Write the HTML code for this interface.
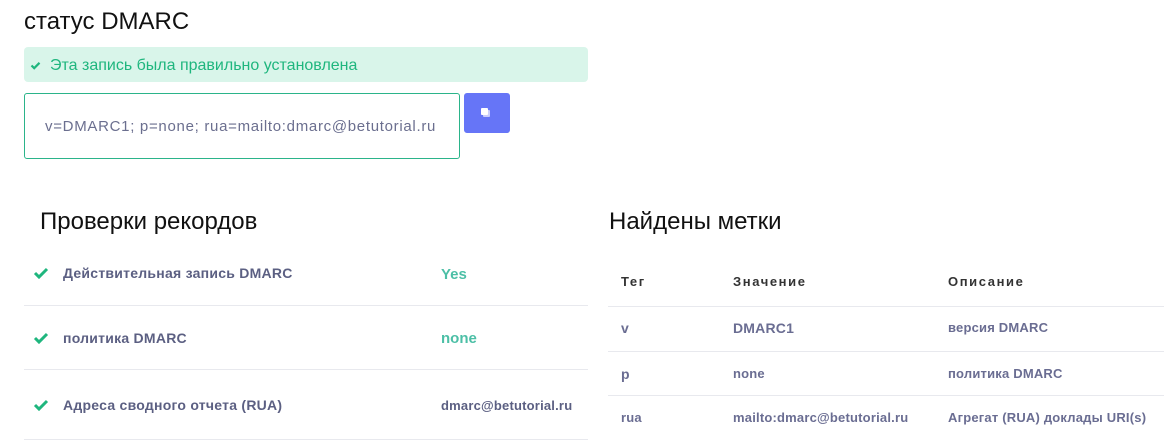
<!DOCTYPE html>
<html><head><meta charset="utf-8"><style>
*{margin:0;padding:0;box-sizing:border-box}
body{width:1164px;height:446px;background:#fff;font-family:"Liberation Sans","Noto Sans CJK SC",sans-serif;position:relative;overflow:hidden}
.a{position:absolute;white-space:nowrap}
.h{font-size:24px;color:#111}
.row{color:#5b5f82;font-weight:bold;font-size:14px;letter-spacing:0.25px}
.line{position:absolute;height:1px;background:#e8e9ee}
.th{font-size:13px;font-weight:bold;letter-spacing:1.6px;color:#333}
.td{font-size:14px;font-weight:bold;color:#6a6d92;letter-spacing:0.2px}
</style></head><body>
<div class="a h" style="left:24px;top:8px">статус DMARC</div>
<div class="a" style="left:24px;top:47px;width:564px;height:35px;background:#d9f5ea;border-radius:4px"></div>
<svg class="a" style="left:30px;top:61px" width="11" height="9" viewBox="0 0 11 9"><path d="M1.5 4.5L4.2 7.2L9.5 1.8" fill="none" stroke="#1fb67e" stroke-width="2.2"/></svg>
<div class="a" style="left:50px;top:57px;font-size:16px;color:#1fb67e">Эта запись была правильно установлена</div>
<div class="a" style="left:24px;top:93px;width:436px;height:66px;border:1px solid #2bb48a;border-radius:3px"></div>
<div class="a" style="left:45px;top:118px;font-size:15px;color:#6b6f8f;letter-spacing:0.7px">v=DMARC1; p=none; rua=mailto:dmarc@betutorial.ru</div>
<div class="a" style="left:464px;top:93px;width:46px;height:40px;background:#6675f7;border-radius:3px"></div>
<div class="a" style="left:483px;top:110px;width:7px;height:7px;background:#c9cdfb;border-radius:1px"></div>
<div class="a" style="left:481px;top:108px;width:7px;height:7px;background:#fff;border-radius:1px"></div>

<div class="a h" style="left:40px;top:208px">Проверки рекордов</div>
<div class="a h" style="left:609px;top:208px">Найдены метки</div>

<svg class="a" style="left:33px;top:267px" width="16" height="12" viewBox="0 0 16 12"><path d="M2 6L6 10L14 2" fill="none" stroke="#1fb67e" stroke-width="3"/></svg>
<div class="a row" style="left:63px;top:265px">Действительная запись DMARC</div>
<div class="a" style="left:441px;top:266px;font-size:15px;font-weight:bold;color:#4cbfa6">Yes</div>
<div class="line" style="left:24px;top:305px;width:564px"></div>
<svg class="a" style="left:33px;top:332px" width="16" height="12" viewBox="0 0 16 12"><path d="M2 6L6 10L14 2" fill="none" stroke="#1fb67e" stroke-width="3"/></svg>
<div class="a row" style="left:63px;top:330px">политика DMARC</div>
<div class="a" style="left:441px;top:330px;font-size:15px;font-weight:bold;color:#4cbfa6">none</div>
<div class="line" style="left:24px;top:369px;width:564px"></div>
<svg class="a" style="left:33px;top:399px" width="16" height="12" viewBox="0 0 16 12"><path d="M2 6L6 10L14 2" fill="none" stroke="#1fb67e" stroke-width="3"/></svg>
<div class="a row" style="left:63px;top:397px">Адреса сводного отчета (RUA)</div>
<div class="a row" style="left:441px;top:398px;font-size:13px;letter-spacing:0.2px">dmarc@betutorial.ru</div>
<div class="line" style="left:24px;top:439px;width:564px"></div>

<div class="a th" style="left:621px;top:274px">Тег</div>
<div class="a th" style="left:733px;top:274px">Значение</div>
<div class="a th" style="left:948px;top:274px">Описание</div>
<div class="line" style="left:608px;top:306px;width:556px"></div>
<div class="a td" style="left:621px;top:320px">v</div>
<div class="a td" style="left:733px;top:320px">DMARC1</div>
<div class="a td" style="left:948px;top:320px;font-size:13px">версия DMARC</div>
<div class="line" style="left:608px;top:351px;width:556px"></div>
<div class="a td" style="left:621px;top:366px">p</div>
<div class="a td" style="left:733px;top:366px;font-size:13px">none</div>
<div class="a td" style="left:948px;top:366px;font-size:13px">политика DMARC</div>
<div class="line" style="left:608px;top:395px;width:556px"></div>
<div class="a td" style="left:621px;top:410px;font-size:13px">rua</div>
<div class="a td" style="left:733px;top:410px;font-size:13px">mailto:dmarc@betutorial.ru</div>
<div class="a td" style="left:948px;top:410px;font-size:13px">Агрегат (RUA) доклады URI(s)</div>
</body></html>
